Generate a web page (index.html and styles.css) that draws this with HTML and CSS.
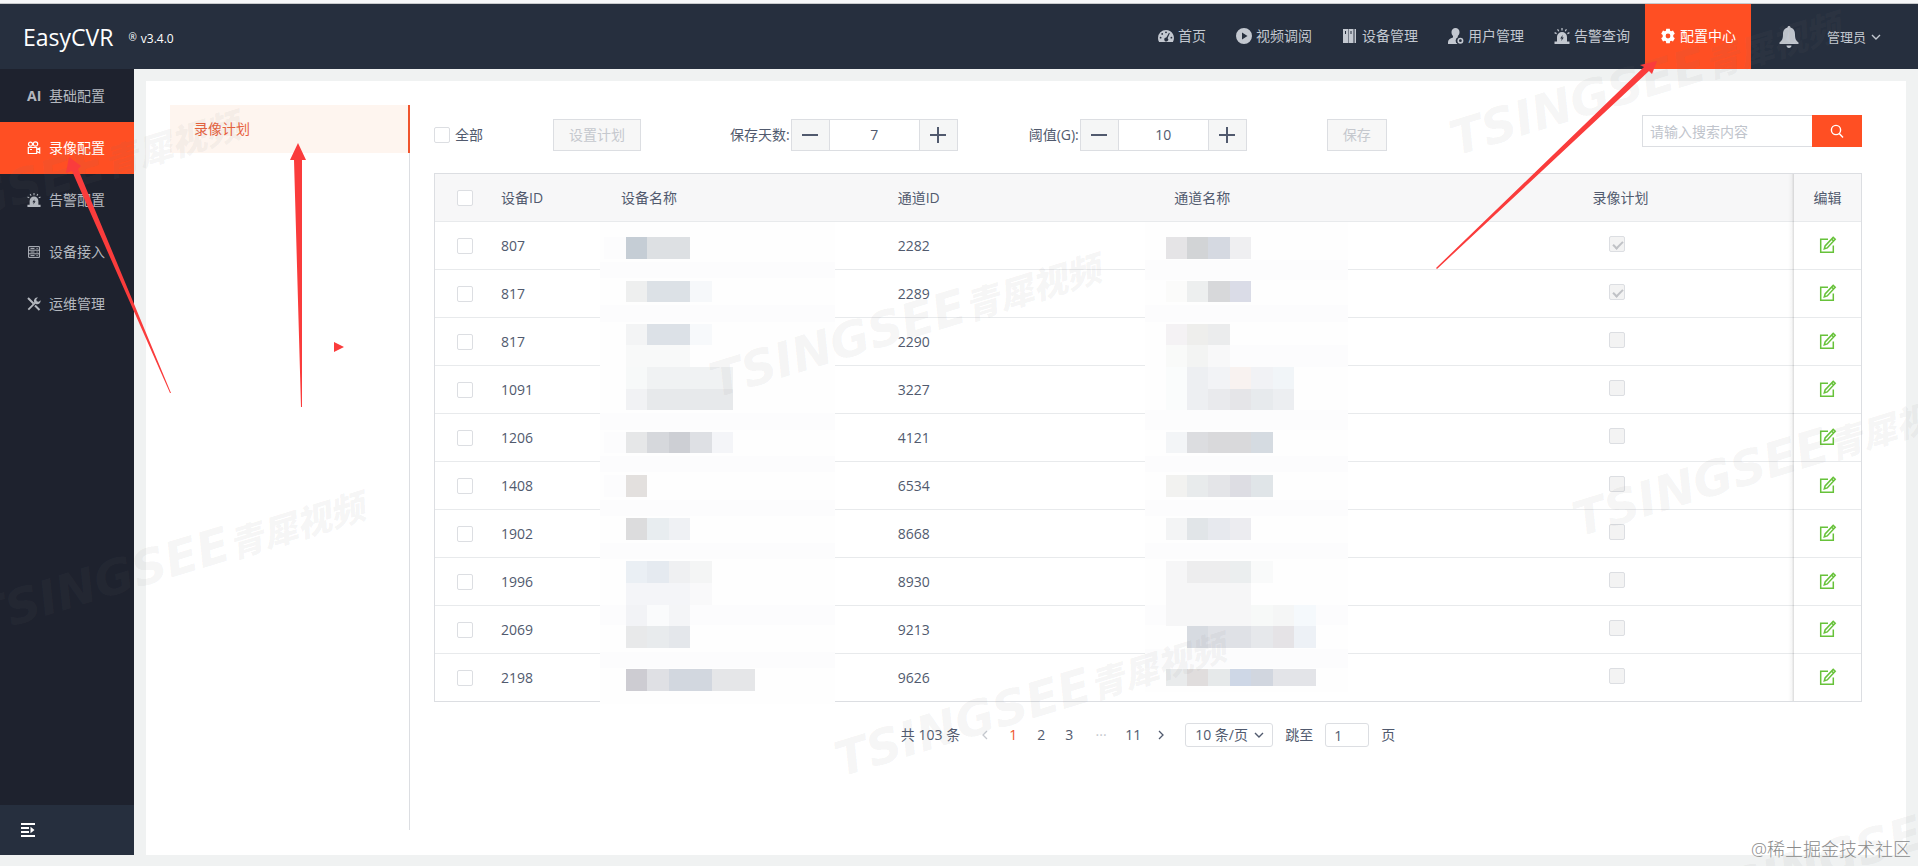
FILE: index.html
```html
<!DOCTYPE html>
<html lang="zh-CN">
<head>
    <meta charset="UTF-8">
    <title>EasyCVR</title>
    <link rel="stylesheet" href="styles.css">
</head>
<body>

<!-- 图标 -->
<svg class="sprite" aria-hidden="true">
    <symbol id="i-home" viewBox="0 0 16 16">
        <path fill-rule="evenodd" d="M8 2a8 8 0 0 0-8 8c0 1.500.4 2.900 1.100 4h13.800A8 8 0 0 0 8 2zM8 3.400a.9.9 0 1 1 0 1.800.9.9 0 0 1 0-1.800zM4.200 5a.9.9 0 1 1 0 1.800.9.9 0 0 1 0-1.800zM2.600 8.800a.9.9 0 1 1 0 1.800.9.9 0 0 1 0-1.800zM13.400 8.800a.9.9 0 1 1 0 1.800.9.9 0 0 1 0-1.800zM11 4.700l.8.6-2.200 4.900a1.900 1.900 0 1 1-1.300-.6z"/>
    </symbol>
    <symbol id="i-play" viewBox="0 0 16 16">
        <path fill-rule="evenodd" d="M8 0a8 8 0 1 1 0 16A8 8 0 0 1 8 0zM6 4.500v7L11.500 8z"/>
    </symbol>
    <symbol id="i-device" viewBox="0 0 16 16">
        <path fill-rule="evenodd" d="M1 1h5v14H1zM6.500 1h5v14h-5zM12.500 1H14v14h-1.500zM3 3v3h1V3zM8.500 3v3h1V3z"/>
    </symbol>
    <symbol id="i-user" viewBox="0 0 16 16">
        <path d="M7.500 0a4 4 0 0 1 4 4.200c0 1.800-.8 3-1.700 3.800v1.200A3.900 3.900 0 0 0 9.500 16H0v-2c0-2.500 2-3.400 5-4.600V8C4.200 7.200 3.500 6 3.500 4.200A4 4 0 0 1 7.500 0z"/>
        <circle cx="12.400" cy="12.700" r="2.200" fill="none" stroke="currentColor" stroke-width="1.600"/>
    </symbol>
    <symbol id="i-alarm" viewBox="0 0 16 16">
        <path fill-rule="evenodd" d="M3 13.500V9a5 5 0 0 1 10 0v4.500h2.500V16H.5v-2.500zM8.600 7l-2.400 3.500h1.500L7.300 13l2.500-3.600H8.300z"/>
        <path d="M8 0v2.500M3.600 1.200l1.100 2M12.400 1.200l-1.100 2M.6 4.600l2 1M15.400 4.600l-2 1" stroke="currentColor" stroke-width="1.200"/>
    </symbol>
    <symbol id="i-gear" viewBox="0 0 16 16">
        <path fill-rule="evenodd" d="M6.200.8h3.600l.3 1.900 1.100.6 1.800-.7 1.800 3.100-1.500 1.200v2.200l1.500 1.200-1.800 3.100-1.800-.7-1.100.6-.3 1.900H6.200l-.3-1.900-1.100-.6-1.800.7-1.800-3.100 1.500-1.200V6.900L1.200 5.700 3 2.600l1.800.7 1.100-.6zM8 5.600a2.400 2.400 0 1 0 0 4.800 2.400 2.400 0 0 0 0-4.800z"/>
    </symbol>
    <symbol id="i-bell" viewBox="0 0 20 22">
        <path d="M10 0c1 0 1.500.6 1.500 1.500C14.800 2.300 16 5 16 8.500c0 4.500 1 6 3.500 8V18H.5v-1.500c2.500-2 3.500-3.500 3.500-8C4 5 5.200 2.300 8.500 1.500 8.500.6 9 0 10 0zM7.500 19.500h5c0 1.500-1 2.500-2.500 2.500s-2.500-1-2.500-2.500z"/>
    </symbol>
    <symbol id="i-down" viewBox="0 0 10 10">
        <path d="M1 3l4 4 4-4" fill="none" stroke="currentColor" stroke-width="1.400"/>
    </symbol>
    <symbol id="i-camera" viewBox="0 0 14 14">
        <g fill="none" stroke="currentColor" stroke-width="1.200">
            <circle cx="3.500" cy="3.200" r="2"/><circle cx="8.500" cy="3" r="2.200"/>
            <path d="M1.300 6.500h8.400v6H1.300zM9.700 8.600l3-1.600v5l-3-1.600M3 8.500h2"/>
        </g>
    </symbol>
    <symbol id="i-server" viewBox="0 0 14 14">
        <path d="M1.600 1.600h10.800v10.800H1.600zM1.600 5.200h10.800M1.600 8.800h10.800M3.500 3.400h4M3.500 7h4M3.500 10.600h4M9.500 3.400h1.200M9.500 7h1.200M9.500 10.600h1.200" fill="none" stroke="currentColor" stroke-width="1"/>
    </symbol>
    <symbol id="i-tools" viewBox="0 0 14 14">
        <path d="M1 1l5.500 5.500M8 8.500l4.500 4.500" stroke="currentColor" stroke-width="2"/>
        <path d="M1.300 12.700l7-7" stroke="currentColor" stroke-width="1.800"/>
        <path d="M13.600 3.200a3.400 3.400 0 0 1-4.700 3.700L7.200 5.200A3.400 3.400 0 0 1 11 .5L9.300 2.300l.4 2 2 .5z"/>
    </symbol>
    <symbol id="i-fold" viewBox="0 0 14 14">
        <path d="M0 0h14v2H0zM0 4h8v2H0zM0 8h8v2H0zM0 12h14v2H0zM9.500 3.800L13.500 7l-4 3.200z"/>
    </symbol>
    <symbol id="i-search" viewBox="0 0 14 14">
        <g fill="none" stroke="currentColor" stroke-width="1.400"><circle cx="6" cy="6" r="4.600"/><path d="M9.200 9.400l3.800 4"/></g>
    </symbol>
    <symbol id="i-edit" viewBox="0 0 18 18">
        <g fill="none" stroke="currentColor" stroke-width="1.500">
            <path d="M9 3.200H1.700v13.100h12.600V9.500"/>
            <path d="M14.200 1.400l2 1.800-8 8.700-2.900 1 .8-2.900zM12.600 3.100l2 1.800"/>
        </g>
    </symbol>
    <symbol id="i-minus" viewBox="0 0 16 16"><path d="M0 7h16v2H0z"/></symbol>
    <symbol id="i-plus" viewBox="0 0 16 16"><path d="M0 7h7V0h2v7h7v2H9v7H7V9H0z"/></symbol>
    <symbol id="i-left" viewBox="0 0 10 10"><path d="M7 1L3 5l4 4" fill="none" stroke="currentColor" stroke-width="1.300"/></symbol>
    <symbol id="i-right" viewBox="0 0 10 10"><path d="M3 1l4 4-4 4" fill="none" stroke="currentColor" stroke-width="1.300"/></symbol>
</svg>

<header class="header">
    <div class="logo">EasyCVR</div>
    <div class="version"><span class="reg">®</span> v3.4.0</div>
    <nav class="nav">
        <a href="#"><svg><use href="#i-home"/></svg>首页</a>
        <a href="#"><svg><use href="#i-play"/></svg>视频调阅</a>
        <a href="#"><svg><use href="#i-device"/></svg>设备管理</a>
        <a href="#"><svg><use href="#i-user"/></svg>用户管理</a>
        <a href="#"><svg><use href="#i-alarm"/></svg>告警查询</a>
        <a href="#" class="active"><svg><use href="#i-gear"/></svg>配置中心</a>
    </nav>
    <button type="button" class="bell" aria-label="消息"><svg><use href="#i-bell"/></svg></button>
    <button type="button" class="account">管理员<svg><use href="#i-down"/></svg></button>
</header>

<div class="main">
    <aside class="sidebar">
        <nav class="side-nav">
            <a href="#"><b>AI</b>基础配置</a>
            <a href="#" class="active"><svg><use href="#i-camera"/></svg>录像配置</a>
            <a href="#"><svg><use href="#i-alarm"/></svg>告警配置</a>
            <a href="#"><svg><use href="#i-server"/></svg>设备接入</a>
            <a href="#"><svg><use href="#i-tools"/></svg>运维管理</a>
        </nav>
        <button type="button" class="fold" aria-label="收起菜单"><svg><use href="#i-fold"/></svg></button>
    </aside>

    <div class="panel">
        <nav class="sub-nav">
            <a href="#" class="active">录像计划</a>
        </nav>

        <section class="content">
            <div class="toolbar">
                <label class="all"><input type="checkbox" class="check">全部</label>
                <button type="button" class="btn btn-plan" disabled>设置计划</button>
                <div class="field">
                    <label for="days">保存天数:</label>
                    <div class="stepper">
                        <button type="button" aria-label="减少天数"><svg><use href="#i-minus"/></svg></button>
                        <input type="text" id="days" value="7">
                        <button type="button" aria-label="增加天数"><svg><use href="#i-plus"/></svg></button>
                    </div>
                </div>
                <div class="field">
                    <label for="limit">阈值(G):</label>
                    <div class="stepper">
                        <button type="button" aria-label="减少阈值"><svg><use href="#i-minus"/></svg></button>
                        <input type="text" id="limit" value="10">
                        <button type="button" aria-label="增加阈值"><svg><use href="#i-plus"/></svg></button>
                    </div>
                </div>
                <button type="button" class="btn btn-save" disabled>保存</button>
                <form class="search">
                    <input type="text" placeholder="请输入搜索内容" aria-label="搜索">
                    <button type="button" aria-label="搜索"><svg><use href="#i-search"/></svg></button>
                </form>
            </div>

            <div class="table-wrap">
                <table class="table">
                    <thead>
                    <tr>
                        <th class="c-check"><input type="checkbox" class="check" aria-label="全选"></th>
                        <th class="c-id">设备ID</th>
                        <th class="c-name">设备名称</th>
                        <th class="c-channel">通道ID</th>
                        <th class="c-cname">通道名称</th>
                        <th class="c-plan">录像计划</th>
                        <th class="c-edit">编辑</th>
                    </tr>
                    </thead>
                    <tbody>
                    <tr>
                        <td class="c-check"><input type="checkbox" class="check" aria-label="选择"></td>
                        <td>807</td><td></td><td>2282</td><td></td>
                        <td class="c-plan"><input type="checkbox" class="check" aria-label="录像计划" checked disabled></td>
                        <td class="c-edit"><button type="button" aria-label="编辑"><svg><use href="#i-edit"/></svg></button></td>
                    </tr>
                    <tr>
                        <td class="c-check"><input type="checkbox" class="check" aria-label="选择"></td>
                        <td>817</td><td></td><td>2289</td><td></td>
                        <td class="c-plan"><input type="checkbox" class="check" aria-label="录像计划" checked disabled></td>
                        <td class="c-edit"><button type="button" aria-label="编辑"><svg><use href="#i-edit"/></svg></button></td>
                    </tr>
                    <tr>
                        <td class="c-check"><input type="checkbox" class="check" aria-label="选择"></td>
                        <td>817</td><td></td><td>2290</td><td></td>
                        <td class="c-plan"><input type="checkbox" class="check" aria-label="录像计划" disabled></td>
                        <td class="c-edit"><button type="button" aria-label="编辑"><svg><use href="#i-edit"/></svg></button></td>
                    </tr>
                    <tr>
                        <td class="c-check"><input type="checkbox" class="check" aria-label="选择"></td>
                        <td>1091</td><td></td><td>3227</td><td></td>
                        <td class="c-plan"><input type="checkbox" class="check" aria-label="录像计划" disabled></td>
                        <td class="c-edit"><button type="button" aria-label="编辑"><svg><use href="#i-edit"/></svg></button></td>
                    </tr>
                    <tr>
                        <td class="c-check"><input type="checkbox" class="check" aria-label="选择"></td>
                        <td>1206</td><td></td><td>4121</td><td></td>
                        <td class="c-plan"><input type="checkbox" class="check" aria-label="录像计划" disabled></td>
                        <td class="c-edit"><button type="button" aria-label="编辑"><svg><use href="#i-edit"/></svg></button></td>
                    </tr>
                    <tr>
                        <td class="c-check"><input type="checkbox" class="check" aria-label="选择"></td>
                        <td>1408</td><td></td><td>6534</td><td></td>
                        <td class="c-plan"><input type="checkbox" class="check" aria-label="录像计划" disabled></td>
                        <td class="c-edit"><button type="button" aria-label="编辑"><svg><use href="#i-edit"/></svg></button></td>
                    </tr>
                    <tr>
                        <td class="c-check"><input type="checkbox" class="check" aria-label="选择"></td>
                        <td>1902</td><td></td><td>8668</td><td></td>
                        <td class="c-plan"><input type="checkbox" class="check" aria-label="录像计划" disabled></td>
                        <td class="c-edit"><button type="button" aria-label="编辑"><svg><use href="#i-edit"/></svg></button></td>
                    </tr>
                    <tr>
                        <td class="c-check"><input type="checkbox" class="check" aria-label="选择"></td>
                        <td>1996</td><td></td><td>8930</td><td></td>
                        <td class="c-plan"><input type="checkbox" class="check" aria-label="录像计划" disabled></td>
                        <td class="c-edit"><button type="button" aria-label="编辑"><svg><use href="#i-edit"/></svg></button></td>
                    </tr>
                    <tr>
                        <td class="c-check"><input type="checkbox" class="check" aria-label="选择"></td>
                        <td>2069</td><td></td><td>9213</td><td></td>
                        <td class="c-plan"><input type="checkbox" class="check" aria-label="录像计划" disabled></td>
                        <td class="c-edit"><button type="button" aria-label="编辑"><svg><use href="#i-edit"/></svg></button></td>
                    </tr>
                    <tr>
                        <td class="c-check"><input type="checkbox" class="check" aria-label="选择"></td>
                        <td>2198</td><td></td><td>9626</td><td></td>
                        <td class="c-plan"><input type="checkbox" class="check" aria-label="录像计划" disabled></td>
                        <td class="c-edit"><button type="button" aria-label="编辑"><svg><use href="#i-edit"/></svg></button></td>
                    </tr>
                    </tbody>
                </table>

                <!-- 设备名称打码 -->
                <svg class="mask mask-device" width="235" height="482" viewBox="600 222 235 482" aria-hidden="true">
                    <path fill="#fefefe" d="M600 222h235v482H600z"/>
                    <path fill="#fcfcfd" d="M600 262h235v16H600zM600 305h235v17H600zM600 413h235v17H600zM600 456h235v16H600zM600 500h235v16H600zM600 543h235v16H600zM600 605h235v20H600zM600 652h235v16H600zM604 237h22v22h-22zM604 432h22v21h-22zM604 475h22v22h-22z"/>
                    <path fill="#c5cdd5" d="M626 237h21v22h-21z"/><path fill="#dde0e3" d="M647 237h43v22h-43z"/>
                    <path fill="#eeefef" d="M626 281h21v21h-21z"/><path fill="#dce1e6" d="M647 281h43v21h-43z"/><path fill="#f6f8fa" d="M690 281h22v21h-22z"/>
                    <path fill="#f3f4f5" d="M626 324h21v21h-21z"/><path fill="#dce1e7" d="M647 324h43v21h-43z"/><path fill="#f7f9fb" d="M690 324h22v21h-22z"/>
                    <path fill="#f8f9f9" d="M626 345h64v22h-64z"/>
                    <path fill="#f7f9f9" d="M626 367h21v22h-21z"/><path fill="#f0f2f3" d="M647 367h86v22h-86z"/>
                    <path fill="#f1f2f4" d="M626 389h21v21h-21z"/><path fill="#e7e9eb" d="M647 389h86v21h-86z"/>
                    <path fill="#e6e7e8" d="M626 432h21v21h-21z"/><path fill="#d6d8dc" d="M647 432h22v21h-22z"/><path fill="#cdcfd4" d="M669 432h21v21h-21z"/><path fill="#dee0e4" d="M690 432h22v21h-22z"/><path fill="#f4f5f8" d="M712 432h21v21h-21z"/>
                    <path fill="#e3e0de" d="M626 475h21v22h-21z"/>
                    <path fill="#dcdcdd" d="M626 518h21v22h-21z"/><path fill="#e8edf0" d="M647 518h22v22h-22z"/><path fill="#eff1f4" d="M669 518h21v22h-21z"/>
                    <path fill="#eaeff4" d="M626 561h21v22h-21z"/><path fill="#e5eaf0" d="M647 561h22v22h-22z"/><path fill="#eff0f2" d="M669 561h21v22h-21z"/><path fill="#f4f5f5" d="M690 561h22v22h-22z"/>
                    <path fill="#f4f5f8" d="M626 583h64v22h-64z"/><path fill="#f9f9fa" d="M690 583h22v22h-22z"/>
                    <path fill="#f2f3f6" d="M626 605h21v21h-21z"/><path fill="#fafbfc" d="M647 605h22v21h-22z"/><path fill="#f4f5f7" d="M669 605h21v21h-21z"/>
                    <path fill="#e8e9ea" d="M626 626h21v22h-21z"/><path fill="#e8ebed" d="M647 626h22v22h-22z"/><path fill="#e4e7eb" d="M669 626h21v22h-21z"/>
                    <path fill="#cdccd2" d="M626 669h21v22h-21z"/><path fill="#dfe0e4" d="M647 669h22v22h-22z"/><path fill="#d2d7df" d="M669 669h43v22h-43z"/><path fill="#e5e6e8" d="M712 669h43v22h-43z"/>
                </svg>

                <!-- 通道名称打码 -->
                <svg class="mask mask-channel" width="203" height="470" viewBox="1145 222 203 470" aria-hidden="true">
                    <path fill="#fefefe" d="M1145 222h203v470h-203z"/>
                    <path fill="#fcfcfd" d="M1145 260h203v20h-203zM1145 305h203v17h-203zM1230 345h118v22h-118zM1145 410h203v20h-203zM1145 456h203v16h-203zM1145 500h203v16h-203zM1145 543h203v16h-203zM1145 605h203v20h-203zM1145 649h203v19h-203z"/>
                    <path fill="#e5e4e6" d="M1166 237h21v22h-21z"/><path fill="#d2d4d6" d="M1187 237h21v22h-21z"/><path fill="#d5d9e1" d="M1208 237h22v22h-22z"/><path fill="#efeff1" d="M1230 237h21v22h-21z"/>
                    <path fill="#fbfbfa" d="M1166 281h21v21h-21z"/><path fill="#edefef" d="M1187 281h21v21h-21z"/><path fill="#d7d8da" d="M1208 281h22v21h-22z"/><path fill="#dadce7" d="M1230 281h21v21h-21z"/>
                    <path fill="#f4f2f4" d="M1166 324h21v21h-21z"/><path fill="#eeeeec" d="M1187 324h21v21h-21z"/><path fill="#ebeced" d="M1208 324h22v21h-22z"/>
                    <path fill="#f9faf9" d="M1166 345h21v22h-21z"/><path fill="#f3f4f3" d="M1187 345h21v22h-21z"/><path fill="#f8f8f9" d="M1208 345h22v22h-22z"/>
                    <path fill="#fafcfc" d="M1166 367h21v43h-21z"/><path fill="#edeff2" d="M1187 367h21v43h-21z"/><path fill="#f2f3f6" d="M1208 367h22v22h-22z"/><path fill="#f8f2f0" d="M1230 367h21v22h-21z"/><path fill="#f1f2f5" d="M1251 367h22v22h-22z"/><path fill="#f1f5f8" d="M1273 367h21v22h-21z"/>
                    <path fill="#e9eaed" d="M1208 389h22v21h-22z"/><path fill="#e5e5e8" d="M1230 389h21v21h-21z"/><path fill="#e7eaed" d="M1251 389h22v21h-22z"/><path fill="#eceef1" d="M1273 389h21v21h-21z"/>
                    <path fill="#f3f5f7" d="M1166 432h21v21h-21z"/><path fill="#dcdde0" d="M1187 432h21v21h-21z"/><path fill="#d9d9db" d="M1208 432h43v21h-43z"/><path fill="#d5dbe1" d="M1251 432h22v21h-22z"/>
                    <path fill="#f2f2f0" d="M1166 475h21v22h-21z"/><path fill="#e8ebec" d="M1187 475h21v22h-21z"/><path fill="#e4e5e8" d="M1208 475h22v22h-22z"/><path fill="#dddde3" d="M1230 475h21v22h-21z"/><path fill="#e0e5e8" d="M1251 475h22v22h-22z"/>
                    <path fill="#f3f4f5" d="M1166 518h21v22h-21z"/><path fill="#e1e5e8" d="M1187 518h21v22h-21z"/><path fill="#e7e9ee" d="M1208 518h22v22h-22z"/><path fill="#ececf0" d="M1230 518h21v22h-21z"/>
                    <path fill="#f6f6f7" d="M1166 561h85v65h-85z"/><path fill="#ededee" d="M1187 561h43v22h-43z"/><path fill="#ebeeef" d="M1230 561h21v22h-21z"/><path fill="#f9fafa" d="M1251 561h22v22h-22z"/>
                    <path fill="#f7f9f8" d="M1251 605h22v21h-22z"/><path fill="#f5f6f6" d="M1273 605h21v21h-21z"/><path fill="#f5f9fc" d="M1294 605h22v21h-22z"/>
                    <path fill="#d7dbe1" d="M1187 626h21v22h-21z"/><path fill="#dfe1e6" d="M1208 626h43v22h-43z"/><path fill="#e6e8eb" d="M1251 626h22v22h-22z"/><path fill="#e5e3e6" d="M1273 626h21v22h-21z"/><path fill="#edf1f6" d="M1294 626h22v22h-22z"/>
                    <path fill="#e9ebec" d="M1166 669h21v17h-21z"/><path fill="#e0dddd" d="M1187 669h21v17h-21z"/><path fill="#e6e9ea" d="M1208 669h22v17h-22z"/><path fill="#ced7e6" d="M1230 669h21v17h-21z"/><path fill="#d1d6df" d="M1251 669h22v17h-22z"/><path fill="#e3e4e8" d="M1273 669h43v17h-43z"/>
                </svg>
            </div>

            <div class="pager">
                <span class="total">共 103 条</span>
                <button type="button" class="page prev" aria-label="上一页" disabled><svg><use href="#i-left"/></svg></button>
                <button type="button" class="page active">1</button>
                <button type="button" class="page">2</button>
                <button type="button" class="page">3</button>
                <span class="dots">···</span>
                <button type="button" class="page">11</button>
                <button type="button" class="page" aria-label="下一页"><svg><use href="#i-right"/></svg></button>
                <div class="size">
                    <select aria-label="每页条数">
                        <option>10 条/页</option>
                        <option>20 条/页</option>
                    </select>
                    <svg><use href="#i-down"/></svg>
                </div>
                <label for="jump">跳至</label>
                <input type="text" id="jump" class="jump" value="1">
                <span>页</span>
            </div>
        </section>
    </div>
</div>

<!-- 水印和箭头标注 -->
<svg class="overlay" aria-hidden="true">
    <g class="watermark">
        <text transform="translate(716 398) rotate(-17)">TSINGSEE<tspan class="cn">青犀视频</tspan></text>
        <text transform="translate(841 777) rotate(-17)">TSINGSEE<tspan class="cn">青犀视频</tspan></text>
        <text transform="translate(-20 636) rotate(-17)">TSINGSEE<tspan class="cn">青犀视频</tspan></text>
        <text transform="translate(1456 156) rotate(-17)">TSINGSEE<tspan class="cn">青犀视频</tspan></text>
        <text transform="translate(1579 537) rotate(-17)">TSINGSEE<tspan class="cn">青犀视频</tspan></text>
        <text transform="translate(-145 255) rotate(-17)">TSINGSEE<tspan class="cn">青犀视频</tspan></text>
        <text transform="translate(1704 915) rotate(-17)">TSINGSEE<tspan class="cn">青犀视频</tspan></text>
    </g>
    <g class="arrows">
        <path d="M69 157l12 9-3 3L171 393h-1L72 171l-6 2z"/>
        <path d="M298 143l8 17h-4l0 247h-1l-7-247h-4z"/>
        <path d="M1657 61l-5 13-3-3L1437 269l-1-1L1644 67l-4-2z"/>
        <path d="M334 342l10 5-10 5z"/>
    </g>
</svg>
<div class="credit">@稀土掘金技术社区</div>

</body>
</html>
```
FILE: styles.css
```css
*{
    margin: 0;
    padding: 0;
    box-sizing: border-box;
}
body{
    display: flex;
    flex-direction: column;
    position: relative;
    min-height: 100vh;
    border-top: 3px solid #f6f7f8;
    background-color: #f0f2f2;
    color: #515a6e;
    font: 14px/20px "Open Sans", "Noto Sans CJK SC", sans-serif;
    overflow-x: hidden;
}
a{
    color: inherit;
    text-decoration: none;
}
button, input, select{
    font: inherit;
    color: inherit;
    border: 0;
    background: none;
    border-radius: 0;
}
svg{
    display: block;
    fill: currentColor;
    flex: none;
}
.sprite{
    position: absolute;
    width: 0;
    height: 0;
}

/* 顶部 */
.header{
    display: flex;
    align-items: center;
    height: 66px;
    padding: 0 37px 0 23px;
    border-top: 1px solid #c8cacc;
    background-color: #262f3e;
    color: #c3c8d0;
}
.logo{
    color: #fff;
    font-size: 23px;
    line-height: 32px;
}
.version{
    display: flex;
    gap: 4px;
    margin-left: 15px;
    padding-top: 4px;
    color: #fff;
    font-size: 12px;
}
.reg{
    font-size: 10px;
    line-height: 16px;
}
.nav{
    display: flex;
    align-self: stretch;
    margin-left: auto;
}
.nav a{
    display: flex;
    align-items: center;
    gap: 4px;
    padding: 0 15px 2px;
}
.nav svg{
    width: 16px;
    height: 16px;
}
.nav .active{
    background-color: #ff4f23;
    color: #fff;
}
.bell{
    margin: 0 28px;
}
.bell svg{
    width: 20px;
    height: 22px;
}
.account{
    display: flex;
    align-items: center;
    gap: 5px;
    font-size: 13px;
}
.account svg{
    width: 10px;
    height: 10px;
}

/* 左侧菜单 */
.main{
    flex: 1;
    display: flex;
    padding-bottom: 11px;
}
.sidebar{
    flex: none;
    display: flex;
    flex-direction: column;
    width: 134px;
    padding-top: 1px;
    background-color: #1e222e;
    color: #b4b8bf;
}
.side-nav a{
    display: flex;
    align-items: center;
    gap: 8px;
    height: 52px;
    padding-left: 27px;
}
.side-nav svg,
.side-nav b{
    width: 14px;
    height: 14px;
    line-height: 14px;
}
.side-nav .active{
    background-color: #ff4f23;
    color: #fff;
}
.fold{
    height: 50px;
    margin-top: auto;
    padding-left: 21px;
    background-color: #262f3e;
    color: #fff;
}
.fold svg{
    width: 14px;
    height: 14px;
}

/* 内容区 */
.panel{
    flex: 1;
    display: flex;
    min-width: 0;
    margin: 12px 12px 0;
    padding: 24px 44px 25px 24px;
    background-color: #fff;
}
.sub-nav{
    flex: none;
    width: 240px;
    border-right: 1px solid #dcdee2;
}
.sub-nav a{
    display: block;
    margin-right: -1px;
    padding: 14px 24px;
    border-right: 2px solid #f0542d;
    background-color: #fef5ef;
    color: #e8613c;
}
.content{
    flex: 1;
    min-width: 0;
    padding-left: 24px;
}
.check{
    display: block;
    position: relative;
    width: 16px;
    height: 16px;
    border: 1px solid #dcdee2;
    border-radius: 2px;
    background-color: #fff;
    appearance: none;
}
.check:disabled{
    background-color: #f3f3f3;
}
.check:checked::after{
    content: "";
    position: absolute;
    left: 5px;
    top: 2px;
    width: 4px;
    height: 8px;
    border: solid #c0c2c6;
    border-width: 0 2px 2px 0;
    transform: rotate(45deg);
}

/* 工具栏 */
.toolbar{
    display: flex;
    align-items: center;
    height: 68px;
    padding-bottom: 8px;
}
.all{
    display: flex;
    align-items: center;
    gap: 5px;
}
.btn{
    height: 32px;
    padding: 0 15px;
    border: 1px solid #dcdee2;
    background-color: #f7f7f7;
    color: #c5c8ce;
}
.btn-plan{
    margin: 0 18px 0 70px;
}
.field{
    display: flex;
    align-items: center;
    margin-left: 71px;
}
.field label{
    white-space: nowrap;
    padding-right: 1px;
}
.stepper{
    display: flex;
    height: 32px;
    border: 1px solid #dcdee2;
}
.stepper button{
    display: flex;
    align-items: center;
    justify-content: center;
    width: 37px;
    background-color: #f5f6f6;
}
.stepper svg{
    width: 16px;
    height: 16px;
}
.stepper input{
    width: 91px;
    border: solid #dcdee2;
    border-width: 0 1px;
    background-color: #fff;
    text-align: center;
}
.btn-save{
    margin-left: 80px;
}
.search{
    display: flex;
    align-self: flex-start;
    margin: 10px 0 0 auto;
}
.search input{
    width: 170px;
    height: 32px;
    padding: 0 7px;
    border: 1px solid #dcdee2;
    border-right: 0;
}
.search input::placeholder{
    color: #c0c4cc;
}
.search button{
    display: flex;
    align-items: center;
    justify-content: center;
    width: 50px;
    background-color: #ff4f23;
    color: #fff;
}
.search svg{
    width: 14px;
    height: 14px;
}

/* 表格 */
.table-wrap{
    position: relative;
    border: 1px solid #dcdee2;
}
.table{
    width: 100%;
    table-layout: fixed;
    border-spacing: 0;
    background-color: #fff;
}
.table th,
.table td{
    height: 48px;
    padding-left: 18px;
    border-bottom: 1px solid #e8eaec;
    font-weight: normal;
    text-align: left;
}
.table th{
    background-color: #f7f7f8;
}
.table tr:last-child td{
    height: 47px;
    border-bottom: 0;
}
.table .c-check{
    width: 48px;
    padding-left: 22px;
}
.c-id{
    width: 120px;
}
.c-name,
.c-channel{
    width: 19.4%;
}
.c-cname{
    width: 20.4%;
}
.table .c-plan{
    padding: 0;
    text-align: center;
}
.c-plan .check{
    display: inline-block;
    margin-right: 8px;
    vertical-align: top;
}
.table .c-edit{
    width: 67px;
    padding: 0;
    text-align: center;
}
.c-edit button{
    display: inline-block;
    vertical-align: top;
    color: #67c23a;
}
.c-edit svg{
    width: 18px;
    height: 18px;
}
/* 固定列左侧阴影 */
.table-wrap::after{
    content: "";
    position: absolute;
    top: 0;
    right: 67px;
    bottom: 0;
    width: 6px;
    background: linear-gradient(to left, rgba(0, 0, 0, .14), rgba(0, 0, 0, .03) 40%, transparent);
}
.mask{
    position: absolute;
    top: 48px;
}
.mask-device{
    left: 165px;
}
.mask-channel{
    left: 710px;
}

/* 分页 */
.pager{
    display: flex;
    align-items: center;
    justify-content: center;
    gap: 4px;
    padding-top: 21px;
}
.total{
    margin-right: 9px;
}
.page{
    display: flex;
    align-items: center;
    justify-content: center;
    min-width: 24px;
    height: 24px;
}
.page svg,
.size svg{
    width: 10px;
    height: 10px;
}
.page.active{
    color: #f0542d;
}
.prev{
    color: #c5c8ce;
}
.dots{
    width: 32px;
    text-align: center;
    color: #c5c8ce;
}
.size{
    position: relative;
    margin: 0 8px;
}
.size select{
    width: 88px;
    height: 24px;
    padding: 0 9px;
    border: 1px solid #dcdee2;
    border-radius: 3px;
    background-color: #fff;
    appearance: none;
}
.size svg{
    position: absolute;
    right: 9px;
    top: 7px;
}
.jump{
    width: 44px;
    height: 24px;
    margin: 0 8px;
    padding: 0 8px;
    border: 1px solid #dcdee2;
    border-radius: 3px;
}

/* 浮层 */
.overlay{
    position: absolute;
    left: 0;
    top: -3px;
    width: 100%;
    height: 100vh;
    overflow: hidden;
    pointer-events: none;
}
.watermark{
    fill: rgba(120, 120, 120, .08);
    font: italic bold 48px "DejaVu Sans", "Noto Sans CJK SC", sans-serif;
}
.cn{
    font-size: 35px;
    font-weight: 900;
}
.arrows{
    fill: #fa3c3c;
}
.credit{
    position: absolute;
    right: 7px;
    bottom: 5px;
    color: #8a8a8a;
    font-size: 18px;
    font-weight: 300;
    line-height: 24px;
}
```
